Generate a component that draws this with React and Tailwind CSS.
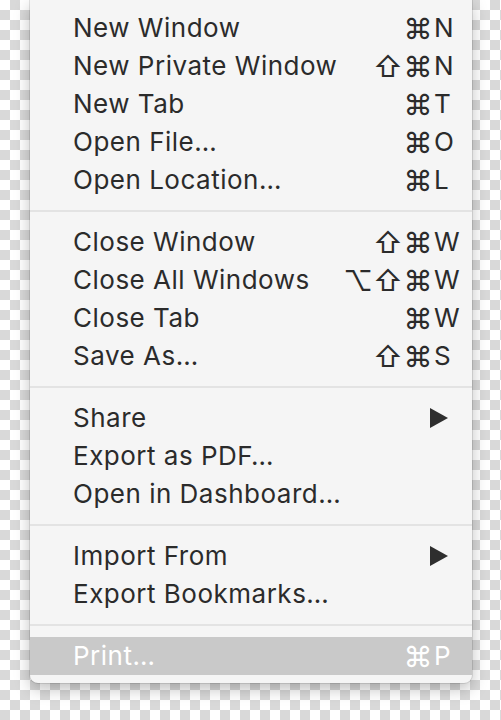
import React from 'react';

// File menu (macOS style), sections split by separators
const SECTIONS = [
  [
    { label: 'New Window', mods: ['⌘'], key: 'N' },
    { label: 'New Private Window', mods: ['⇧', '⌘'], key: 'N' },
    { label: 'New Tab', mods: ['⌘'], key: 'T' },
    { label: 'Open File…', mods: ['⌘'], key: 'O' },
    { label: 'Open Location…', mods: ['⌘'], key: 'L' },
  ],
  [
    { label: 'Close Window', mods: ['⇧', '⌘'], key: 'W' },
    { label: 'Close All Windows', mods: ['⌥', '⇧', '⌘'], key: 'W' },
    { label: 'Close Tab', mods: ['⌘'], key: 'W' },
    { label: 'Save As…', mods: ['⇧', '⌘'], key: 'S' },
  ],
  [
    { label: 'Share', submenu: true },
    { label: 'Export as PDF…' },
    { label: 'Open in Dashboard…' },
  ],
  [
    { label: 'Import From', submenu: true },
    { label: 'Export Bookmarks…' },
  ],
  [{ label: 'Print…', mods: ['⌘'], key: 'P', active: true }],
];

function Arrow() {
  return (
    <svg width="18" height="20" viewBox="0 0 18 20" className="mr-[24px]">
      <polygon points="0,0 18,10 0,20" fill="#2e2e2e" />
    </svg>
  );
}

function MenuRow({ item }) {
  return (
    <div
      className={`h-[38px] flex items-center pl-[43px] ${
        item.active ? 'bg-[#c9c9c9] text-white' : 'text-[#2b2b2b]'
      }`}
    >
      <span className="flex-1 whitespace-nowrap tracking-[0.5px]">{item.label}</span>
      {item.submenu && <Arrow />}
      {item.key && (
        <div className="flex items-center pr-[8px]">
          {item.mods.map((m, i) => (
            <span key={i} className="w-[30px] text-center text-[29px]">{m}</span>
          ))}
          <span className="w-[31px] pl-[1px]">{item.key}</span>
        </div>
      )}
    </div>
  );
}

export default function App() {
  return (
    <div
      className="w-[501px] h-[720px] overflow-hidden bg-[repeating-conic-gradient(#d9d9d9_0_25%,#ffffff_0_50%)] bg-[length:20px_20px]"
      style={{ fontFamily: 'Inter, "DejaVu Sans", sans-serif' }}
    >
      <div className="ml-[30px] w-[442px] bg-[#f5f5f5] rounded-b-[8px] pt-[9px] pb-[8px] text-[26px] leading-none shadow-[0_0_0_1px_rgba(0,0,0,0.1),0_6px_16px_rgba(0,0,0,0.25)]">
        {SECTIONS.map((section, si) => (
          <div key={si}>
            {si > 0 && (
              <div className="h-[24px] flex items-center">
                <div className="w-full h-[2px] bg-[#e3e3e3]" />
              </div>
            )}
            {section.map((item) => (
              <MenuRow key={item.label} item={item} />
            ))}
          </div>
        ))}
      </div>
    </div>
  );
}
